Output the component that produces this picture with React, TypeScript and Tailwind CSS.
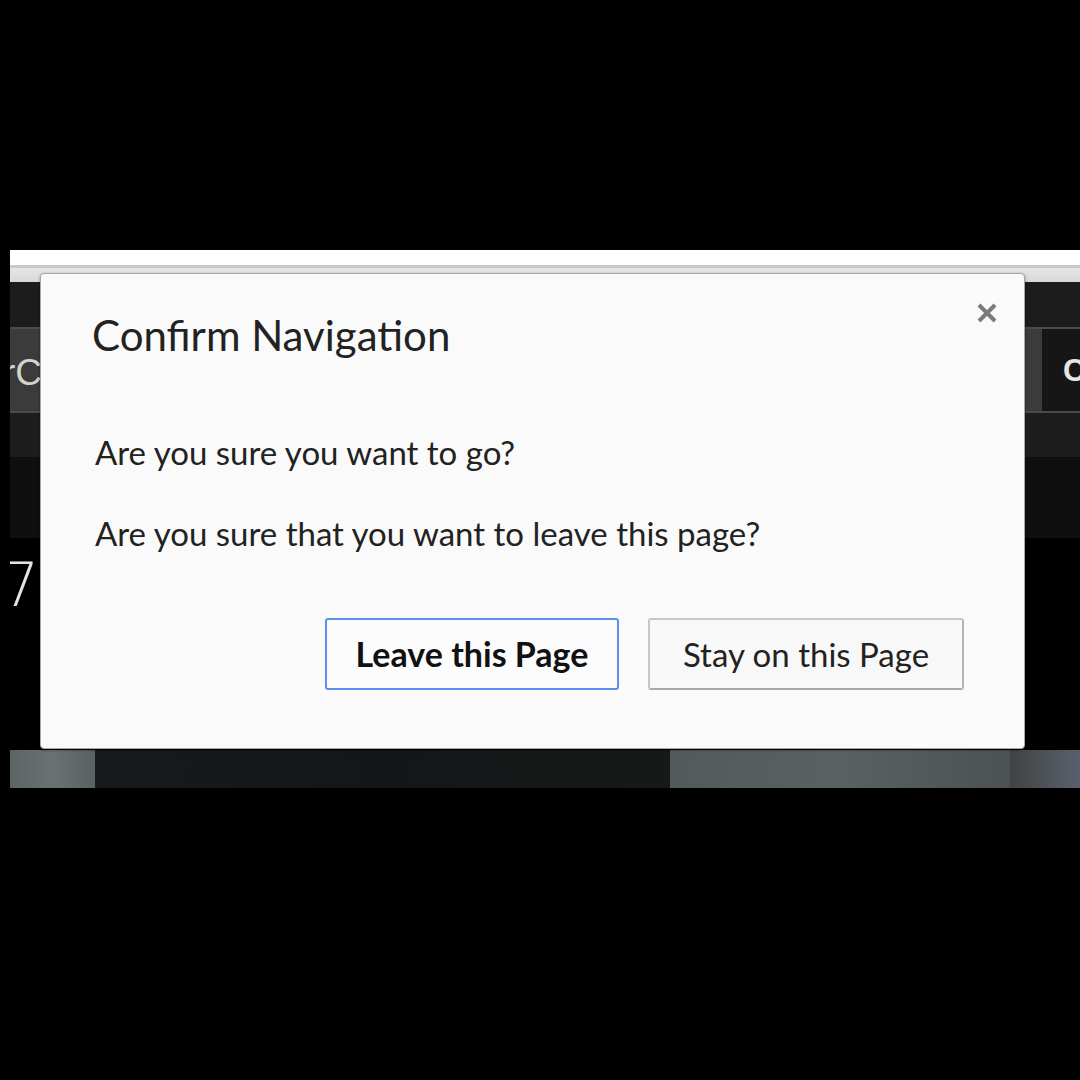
import React from "react";

function CloseIcon() {
  return (
    <svg width="22" height="22" viewBox="0 0 22 22" className="block">
      <path d="M3 3 L19 19 M19 3 L3 19" stroke="#7a7a7a" strokeWidth="4" strokeLinecap="butt" />
    </svg>
  );
}

export default function App() {
  const font = { fontFamily: "Lato, 'Open Sans', sans-serif" };
  return (
    <div className="w-[1080px] h-[1080px] bg-black pt-[250px] pl-[10px] overflow-hidden">
      <div className="relative w-[1070px] h-[538px] flex flex-col overflow-hidden" style={{ fontFamily: "'Liberation Sans', sans-serif" }}>
        {/* top white bar */}
        <div className="h-[15px] bg-white shrink-0" />
        <div className="h-[3px] bg-[#c9c9c9] shrink-0" />
        <div className="h-[14px] bg-gradient-to-b from-[#e6e6e6] to-[#d8d8d8] shrink-0" />
        {/* dark toolbar */}
        <div className="h-[45px] bg-[#1c1c1c] shrink-0" />
        {/* search row */}
        <div className="h-[86px] shrink-0 border-y-2 border-[#4b4b4b] bg-[#3b3b3b] flex">
          <div className="w-[30px] overflow-hidden flex items-center">
            <span className="text-[37px] text-[#d6d2c8] leading-none whitespace-nowrap -ml-[7px] pt-[4px]">rC</span>
          </div>
          <div className="ml-[1002px] flex-1 bg-[#161616] flex items-center overflow-hidden">
            <span className="ml-[21px] text-[31px] font-bold text-[#e6e6e6] leading-none">C</span>
          </div>
        </div>
        <div className="h-[44px] bg-[#1d1d1d] shrink-0" />
        <div className="h-[81px] bg-[#0f0f0f] shrink-0" />
        {/* black area with number */}
        <div className="h-[212px] bg-black shrink-0 overflow-hidden">
          <div className="mt-[17px] -ml-[9px] text-[60px] leading-none text-[#e4e4e4]" style={{ fontFamily: "'DejaVu Sans', sans-serif", fontWeight: 200 }}>7</div>
        </div>
        {/* bottom image strip */}
        <div className="h-[38px] shrink-0 flex">
          <div className="w-[85px] bg-gradient-to-r from-[#5d6466] via-[#6a7173] to-[#5a6163]" />
          <div className="w-[575px] bg-gradient-to-r from-[#17191b] via-[#141618] to-[#171918]" />
          <div className="w-[340px] bg-gradient-to-r from-[#525a5a] via-[#5a6161] to-[#4c5252]" />
          <div className="flex-1 bg-gradient-to-r from-[#404444] to-[#5a606c]" />
        </div>

        {/* dialog */}
        <div
          className="absolute left-[30px] top-[23px] w-[985px] h-[476px] bg-[#fafafa] rounded-[4px] border border-[#a8a8a8] shadow-[0_1px_3px_rgba(0,0,0,0.4)] flex flex-col"
          style={font}
        >
          <div className="flex justify-between items-start">
            <div className="ml-[51px] mt-[40px] text-[42px] leading-none text-[#222]">Confirm Navigation</div>
            <div className="mt-[28px] mr-[26px]">
              <CloseIcon />
            </div>
          </div>
          <div className="ml-[54px] mt-[80px] text-[33px] leading-none text-[#222]">Are you sure you want to go?</div>
          <div className="ml-[54px] mt-[48px] text-[33px] leading-none text-[#222]">Are you sure that you want to leave this page?</div>
          <div className="mt-[68px] mr-[60px] flex justify-end gap-[29px]">
            <button className="w-[294px] h-[72px] rounded-[3px] border-2 border-[#5b8ff3] bg-[#fcfcfc] text-[34px] font-bold text-[#111] leading-none">
              Leave this Page
            </button>
            <button className="w-[316px] h-[72px] rounded-[3px] border-2 border-[#c6c6c6] border-b-[#a9a9a9] border-r-[#b5b5b5] bg-[#f8f8f8] text-[33px] text-[#222] leading-none">
              Stay on this Page
            </button>
          </div>
        </div>
      </div>
    </div>
  );
}
